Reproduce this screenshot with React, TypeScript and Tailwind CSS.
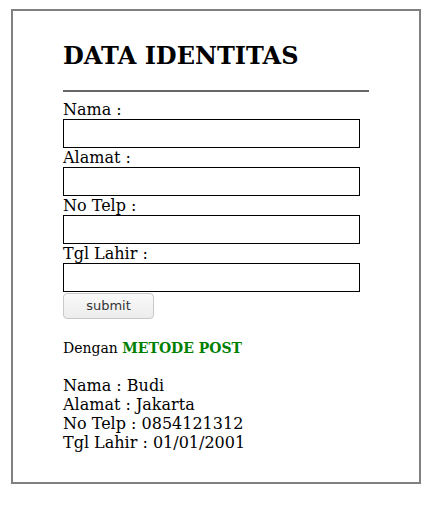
import React from 'react';

const serif = { fontFamily: '"DejaVu Serif", serif' };

const fields = ['Nama :', 'Alamat :', 'No Telp :', 'Tgl Lahir :'];

const hasil = [
  'Nama : Budi',
  'Alamat : Jakarta',
  'No Telp : 0854121312',
  'Tgl Lahir : 01/01/2001',
];

export default function App() {
  return (
    <div className="min-h-screen bg-white pt-[9px] pl-[11px]" style={serif}>
      <div className="w-[410px] h-[475px] border-2 border-[#808080] px-[50px] pt-[30px] text-black">
        <h1 className="text-[24px] leading-[30px] font-bold">DATA IDENTITAS</h1>
        <div className="mt-[19px] h-[2px] bg-[#666666]" />

        <form className="mt-[8px]" onSubmit={(e) => e.preventDefault()}>
          {fields.map((f) => (
            <div key={f}>
              <div className="text-[16px] leading-[19px]">{f}</div>
              <input
                type="text"
                className="block w-[297px] h-[29px] border border-black bg-white outline-none"
              />
            </div>
          ))}
          <button
            type="submit"
            className="mt-[1px] w-[91px] h-[26px] rounded-[4px] border border-[#c8c8c8] bg-gradient-to-b from-[#fafafa] to-[#ececec] text-[13px] text-[#333] font-['DejaVu_Sans',sans-serif]"
          >
            submit
          </button>
        </form>

        <p className="mt-[20px] text-[14px] leading-[18px]">
          Dengan <b className="text-[#008000]">METODE POST</b>
        </p>

        <div className="mt-[19px] text-[16px] leading-[19px]">
          {hasil.map((h) => (
            <div key={h}>{h}</div>
          ))}
        </div>
      </div>
    </div>
  );
}
